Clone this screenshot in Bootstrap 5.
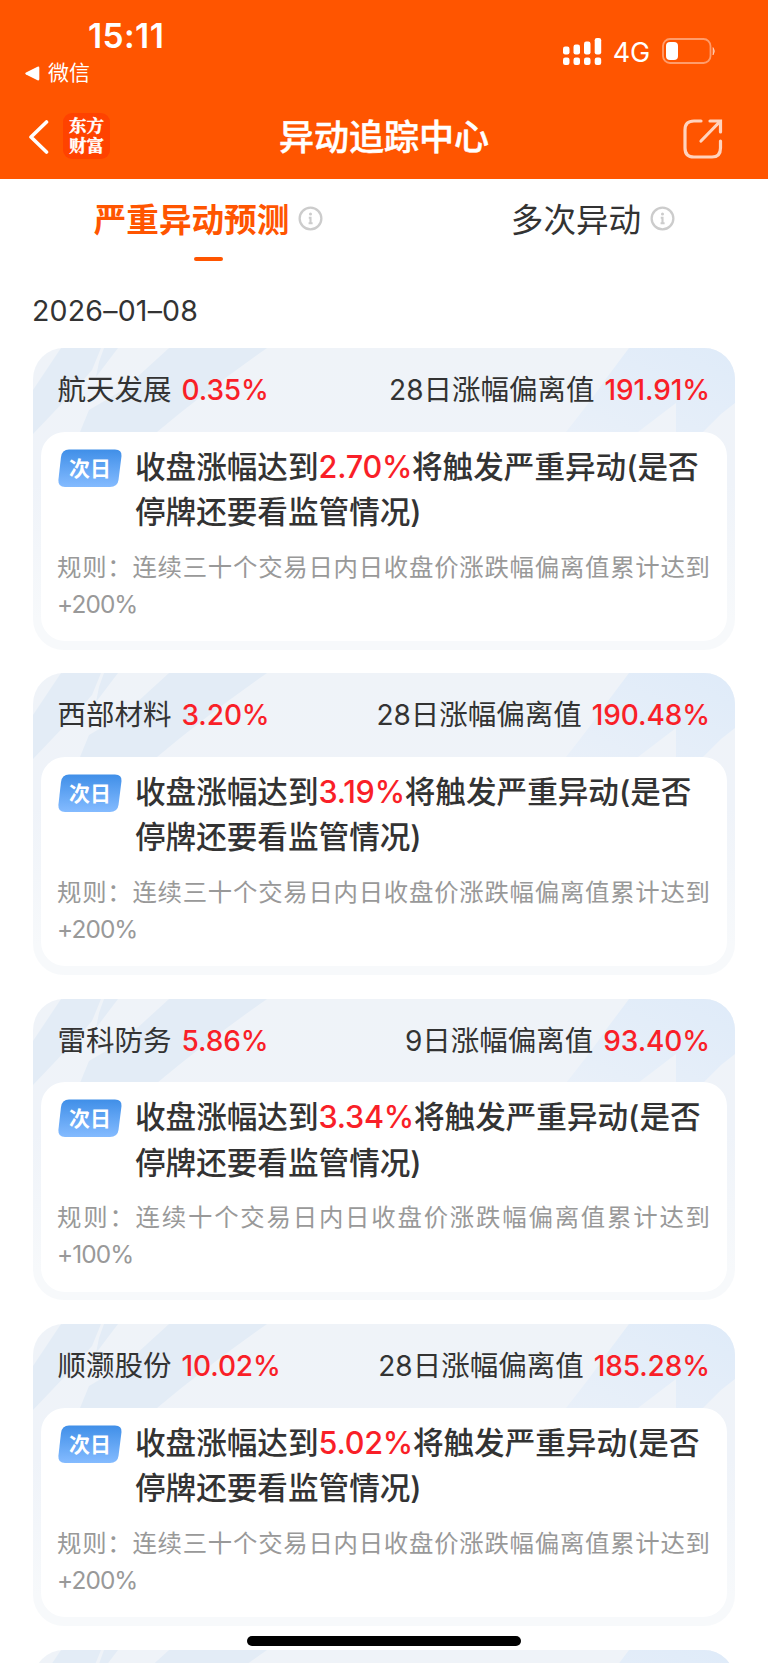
<!DOCTYPE html>
<html lang="zh-CN">
<head>
<meta charset="utf-8">
<meta name="viewport" content="width=device-width, initial-scale=1">
<title>异动追踪中心</title>
<link rel="stylesheet" href="https://cdn.jsdelivr.net/npm/bootstrap@5.3.0/dist/css/bootstrap.min.css">
<style>
  body{font-family:Inter,"Noto Sans CJK SC",sans-serif;color:#333;background:#fff;height:1663px;overflow:hidden;font-feature-settings:"calt" 0}
  svg{display:block;flex:none}
  .app-head{background:#ff5500;color:#fff;height:179px}
  .status-row{height:96px;padding:17px 52px 0 25px}
  .clock{font-size:33.5px;font-weight:600;line-height:38px;padding-left:63px;letter-spacing:.4px}
  .back-app{font-size:21px;line-height:30px;gap:8px;margin-top:3px}
  .net{font-size:27px;line-height:30px;letter-spacing:-.2px;margin:5px 12px 0 9px}
  .title-row{height:83px;padding:0 28px 2px}
  .title-row>*{flex:1 1 0}
  .title-row .page-title{font-size:35px;font-weight:500;-webkit-text-stroke:.5px #fff;line-height:48px;flex:none}
  .logo-tile{width:47px;height:46px;border-radius:9px;background:#ff4200;font-family:"Noto Serif CJK SC","Noto Sans CJK SC",serif;font-size:17.5px;line-height:20px;font-weight:700;-webkit-text-stroke:.4px #fff;padding-top:2px;margin:-1px 0 0 14px}
  .tab-row{height:84px;padding-top:17px}
  .tab-item{font-size:32.6px;line-height:48px;gap:9px}
  .tab-item svg{margin-top:-3px}
  .tab-item.on{color:#ff5500;font-weight:700}
  .tab-bar{width:29px;height:4px;border-radius:2px;background:#ff5500;margin-top:12.5px}
  .day{font-size:28.5px;line-height:36px;margin:30px 0 0 32px;letter-spacing:.2px}
  .stock-list{padding:19px 33px 0;gap:23.9px;height:1334px;overflow:hidden}
  .stock{height:301.5px;border-radius:31px;background:linear-gradient(#eff3f8 0,#eff3f9 45%,#f7f9fb 90%);padding:0 8px;flex:none}
  .stock .stripes{position:absolute;left:0;top:0}
  .stock-head{height:83.5px;padding:0 17px 0 16.500px;font-size:28.5px;line-height:40px}
  .stock-head b{font-weight:500;color:#f91f28;font-size:28px;margin-left:10px;letter-spacing:-.1px}
  .stock-head .num{font-size:28px}
  .stock-body{height:209.500px;border-radius:24px;background:#fff;padding:12px 17px 0}
  .next{width:64px;height:39px;margin-top:5px}
  .next span{position:absolute;inset:0;font-size:21px;font-weight:700;line-height:39px;text-align:center;color:#fff}
  .cond{font-size:30.6px;line-height:45.3px;font-weight:500;margin-left:13px;white-space:nowrap}
  .cond b{font-weight:500;color:#f91f28;letter-spacing:-.25px}
  .rule{font-size:24.4px;line-height:37px;color:#999;margin:14.5px 0 0 -1px;width:653px}
  .rule div:first-child{text-align-last:justify;white-space:nowrap}
  .rule div:last-child{letter-spacing:-.9px}
  .home-bar{left:247px;top:1636px;width:274px;height:10px;border-radius:5px;background:#000}
</style>
<script src="https://cdn.jsdelivr.net/npm/bootstrap@5.3.0/dist/js/bootstrap.bundle.min.js"></script>
</head>
<body>
<svg width="0" height="0" class="position-absolute">
  <defs>
    <linearGradient id="blueFade" x1="0" y1="0" x2="0" y2="1"><stop offset="0" stop-color="#408fe8"/><stop offset="1" stop-color="#84bbff"/></linearGradient>
    <linearGradient id="cornerFade" x1="1" y1="0" x2="0" y2="1"><stop offset="0" stop-color="#dfebf9"/><stop offset="1" stop-color="#e9f0f9"/></linearGradient>
    <symbol id="stripes" viewBox="0 0 702 110">
      <g fill="#e3ecf6"><path d="M28 0H68L59 22L39 45L0 86V42Z"/><path d="M71 0H85L63 29L66 14Z"/><path d="M136 0H234Q174 42 124 84H47L56 62L90 42Z"/></g>
      <path fill="url(#cornerFade)" d="M596 0H702V55L688 66L670 84H643V55L605 84H533Q560 50 575 28Z"/>
    </symbol>
    <symbol id="info" viewBox="0 0 26 26"><circle cx="13" cy="13" r="11.300" fill="none" stroke="#ccc" stroke-width="2.400"/><circle cx="13" cy="8.400" r="1.600" fill="#ccc"/><path d="M11.200 12.200H13V18M11 18h4.200" fill="none" stroke="#ccc" stroke-width="2.200"/></symbol>
    <symbol id="tag" viewBox="0 0 64 39"><path fill="url(#blueFade)" d="M11 .5H57Q64 .5 63.500 7L60.500 31Q59.500 38 52 38H7Q0 38 .4 31L3 8Q4 .5 11 .5Z"/></symbol>
  </defs>
</svg>

<header class="app-head">
  <div class="status-row d-flex justify-content-between">
    <div>
      <div class="clock">15:11</div>
      <div class="back-app d-flex align-items-center">
        <svg width="15" height="15" viewBox="0 0 15 15"><path d="M1 6.400L12.500.8Q14.300 0 14.300 2V13Q14.300 15 12.500 14.200L1 8.600Q-.5 7.500 1 6.400Z" fill="#fff"/></svg>
        <span>微信</span>
      </div>
    </div>
    <div class="d-flex align-items-start pt-3">
      <svg class="mt-1" width="41" height="36" viewBox="0 0 41 36" fill="#fff"><rect x="0" y="9.500" width="6.500" height="8" rx="2.200"/><rect x="10.500" y="7.500" width="6.500" height="10" rx="2.200"/><rect x="21" y="4.500" width="6.500" height="13" rx="2.200"/><rect x="31.700" y="1" width="6.500" height="16.500" rx="2.200"/><rect x="0" y="20.500" width="6.500" height="7.500" rx="2.200"/><rect x="10.500" y="20.500" width="6.500" height="7.500" rx="2.200"/><rect x="21" y="20.500" width="6.500" height="7.500" rx="2.200"/><rect x="31.700" y="20.500" width="6.500" height="7.500" rx="2.200"/></svg>
      <span class="net">4G</span>
      <svg class="mt-1" width="54" height="28" viewBox="0 0 54 28"><rect x="1" y="2" width="47.500" height="24" rx="7" fill="none" stroke="#fff" stroke-opacity=".42" stroke-width="1.800"/><rect x="4" y="5" width="12" height="18" rx="4" fill="#fff"/><path d="M51 10.500Q54 14 51 18Z" fill="#fff" stroke="#fff" stroke-opacity=".4" fill-opacity=".5"/></svg>
    </div>
  </div>
  <div class="title-row d-flex align-items-center">
    <div class="d-flex align-items-center">
      <svg width="21" height="34" viewBox="0 0 21 34"><path d="M18.500 2L3 17L18.500 32" fill="none" stroke="#fff" stroke-width="3.600" stroke-linecap="round" stroke-linejoin="round"/></svg>
      <div class="logo-tile text-center"><div>东方</div><div>财富</div></div>
    </div>
    <div class="page-title">异动追踪中心</div>
    <div class="d-flex justify-content-end pt-1">
      <svg width="57" height="40" viewBox="0 0 57 40" fill="none" stroke="#ffd3be" stroke-width="3.200" stroke-linecap="round"><path d="M18 2H11Q2 2 2 11V29Q2 38 11 38H29Q37.500 38 37.500 29V22M27 2H37.500V13M37 2.500L18 22"/></svg>
    </div>
  </div>
</header>

<nav class="tab-row row g-0">
  <div class="col-6 d-flex flex-column align-items-center" style="padding-left:33px">
    <div class="tab-item on d-flex align-items-center">严重异动预测<svg width="25" height="25"><use href="#info"/></svg></div>
    <div class="tab-bar"></div>
  </div>
  <div class="col-6 d-flex justify-content-center align-items-start" style="padding-left:34px">
    <div class="tab-item d-flex align-items-center">多次异动<svg width="25" height="25"><use href="#info"/></svg></div>
  </div>
</nav>
<div class="day">2026–01–08</div>

<main class="stock-list d-flex flex-column">
  <section class="stock position-relative overflow-hidden">
    <svg class="stripes" width="702" height="110"><use href="#stripes"/></svg>
    <div class="stock-head position-relative d-flex justify-content-between align-items-center text-nowrap"><div>航天发展<b>0.35%</b></div><div><span class="num">28</span>日涨幅偏离值<b>191.91%</b></div></div>
    <div class="stock-body position-relative">
      <div class="d-flex"><div class="next position-relative"><svg width="64" height="39"><use href="#tag"/></svg><span>次日</span></div><div class="cond">收盘涨幅达到<b>2.70%</b>将触发严重异动(是否<br>停牌还要看监管情况)</div></div>
      <div class="rule"><div>规则：连续三十个交易日内日收盘价涨跌幅偏离值累计达到</div><div>+200%</div></div>
    </div>
  </section>
  <section class="stock position-relative overflow-hidden">
    <svg class="stripes" width="702" height="110"><use href="#stripes"/></svg>
    <div class="stock-head position-relative d-flex justify-content-between align-items-center text-nowrap"><div>西部材料<b>3.20%</b></div><div><span class="num">28</span>日涨幅偏离值<b>190.48%</b></div></div>
    <div class="stock-body position-relative">
      <div class="d-flex"><div class="next position-relative"><svg width="64" height="39"><use href="#tag"/></svg><span>次日</span></div><div class="cond">收盘涨幅达到<b>3.19%</b>将触发严重异动(是否<br>停牌还要看监管情况)</div></div>
      <div class="rule"><div>规则：连续三十个交易日内日收盘价涨跌幅偏离值累计达到</div><div>+200%</div></div>
    </div>
  </section>
  <section class="stock position-relative overflow-hidden">
    <svg class="stripes" width="702" height="110"><use href="#stripes"/></svg>
    <div class="stock-head position-relative d-flex justify-content-between align-items-center text-nowrap"><div>雷科防务<b>5.86%</b></div><div><span class="num">9</span>日涨幅偏离值<b>93.40%</b></div></div>
    <div class="stock-body position-relative">
      <div class="d-flex"><div class="next position-relative"><svg width="64" height="39"><use href="#tag"/></svg><span>次日</span></div><div class="cond">收盘涨幅达到<b>3.34%</b>将触发严重异动(是否<br>停牌还要看监管情况)</div></div>
      <div class="rule"><div>规则：连续十个交易日内日收盘价涨跌幅偏离值累计达到</div><div>+100%</div></div>
    </div>
  </section>
  <section class="stock position-relative overflow-hidden">
    <svg class="stripes" width="702" height="110"><use href="#stripes"/></svg>
    <div class="stock-head position-relative d-flex justify-content-between align-items-center text-nowrap"><div>顺灏股份<b>10.02%</b></div><div><span class="num">28</span>日涨幅偏离值<b>185.28%</b></div></div>
    <div class="stock-body position-relative">
      <div class="d-flex"><div class="next position-relative"><svg width="64" height="39"><use href="#tag"/></svg><span>次日</span></div><div class="cond">收盘涨幅达到<b>5.02%</b>将触发严重异动(是否<br>停牌还要看监管情况)</div></div>
      <div class="rule"><div>规则：连续三十个交易日内日收盘价涨跌幅偏离值累计达到</div><div>+200%</div></div>
    </div>
  </section>
  <section class="stock position-relative overflow-hidden">
    <svg class="stripes" width="702" height="110"><use href="#stripes"/></svg>
  </section>
</main>
<div class="home-bar position-fixed"></div>
</body>
</html>
